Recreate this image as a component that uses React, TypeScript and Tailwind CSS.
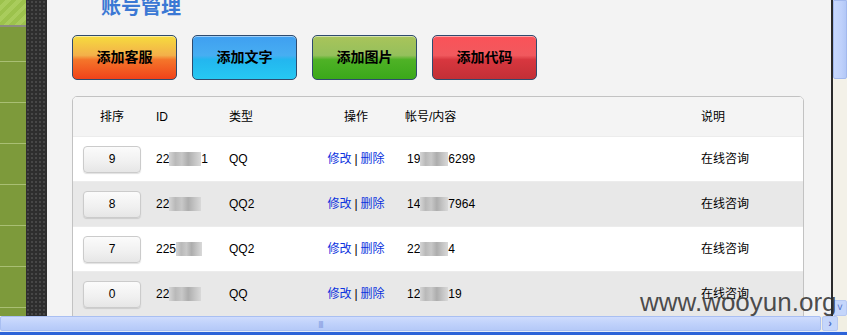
import React from "react";

type Row = {
  order: string;
  idHead: string;
  idTail: string;
  type: string;
  accHead: string;
  accTail: string;
  note: string;
};

const rows: Row[] = [
  { order: "9", idHead: "22", idTail: "1", type: "QQ", accHead: "19", accTail: "6299", note: "在线咨询" },
  { order: "8", idHead: "22", idTail: "", type: "QQ2", accHead: "14", accTail: "7964", note: "在线咨询" },
  { order: "7", idHead: "225", idTail: "", type: "QQ2", accHead: "22", accTail: "4", note: "在线咨询" },
  { order: "0", idHead: "22", idTail: "", type: "QQ", accHead: "12", accTail: "19", note: "在线咨询" },
];

const buttons = [
  { label: "添加客服", cls: "bg-[linear-gradient(180deg,#f6dc3e_0%,#f3b04a_45%,#f5762a_55%,#f0421a_100%)]" },
  { label: "添加文字", cls: "bg-[linear-gradient(180deg,#3f9ff0_0%,#47aef2_45%,#23b6ef_55%,#26c8f2_100%)]" },
  { label: "添加图片", cls: "bg-[linear-gradient(180deg,#a9c45a_0%,#95c05c_45%,#4fb226_55%,#3aa81a_100%)]" },
  { label: "添加代码", cls: "bg-[linear-gradient(180deg,#fb5258_0%,#f1595e_45%,#d8373f_55%,#c22f36_100%)]" },
];

function Mosaic({ w }: { w: number }) {
  return (
    <span
      className="inline-block h-[14px] align-middle bg-[linear-gradient(90deg,#d6d6d6_0%,#b9b9b9_20%,#c8c8c8_40%,#adadad_60%,#c4c4c4_80%,#d9d9d9_100%)]"
      style={{ width: w }}
    />
  );
}

function Sidebar() {
  return (
    <div className="flex w-[26px] shrink-0 flex-col bg-[#7d9a3b]">
      <div className="h-[25px] bg-[repeating-linear-gradient(135deg,#9cc24c_0px,#9cc24c_4px,#a9cc5c_4px,#a9cc5c_8px)]" />
      <div className="h-[2px] bg-[#8c8c80]" />
      <div className="h-[35px] border-b border-[#a9bf74]" />
      {Array.from({ length: 6 }).map((_, i) => (
        <div key={i} className="h-[41px] border-b border-[#a9bf74]" />
      ))}
    </div>
  );
}

export default function App() {
  return (
    <div className="relative flex h-[335px] w-[847px] flex-col overflow-hidden bg-[#f1efe3] font-['Liberation_Sans','Noto_Sans_CJK_SC',sans-serif] text-[12px] text-black">
      <div className="flex h-[316px]">
        <Sidebar />
        <div className="w-[21px] shrink-0 bg-[#2e2e2e] bg-[radial-gradient(#474747_1px,transparent_1.2px)] bg-[length:4px_4px]" />

        <div className="flex-1 overflow-hidden bg-[#f3f3f3] pl-[25px] pr-[27px]">
          <h1 className="-mt-[5px] ml-[29px] h-[24px] text-[20px] font-bold leading-[24px] text-[#3b78d4]">账号管理</h1>

          <div className="mt-[16px] flex gap-[15px]">
            {buttons.map((b) => (
              <button
                key={b.label}
                className={`h-[45px] w-[105px] rounded-[5px] border border-[#2f4b6e] text-[14px] font-bold text-black shadow-[inset_0_1px_0_rgba(255,255,255,0.5)] ${b.cls}`}
              >
                {b.label}
              </button>
            ))}
          </div>

          <div className="mt-[16px] overflow-hidden rounded-t-[5px] border border-[#c2c2c2] bg-white">
            <div className="grid h-[39px] grid-cols-[78px_73px_83px_98px_291px_1fr] items-center bg-[#f4f4f4] leading-[14px]">
              <div className="pl-[27px]">排序</div>
              <div className="pl-[5px]">ID</div>
              <div className="pl-[5px]">类型</div>
              <div className="text-center">操作</div>
              <div>帐号/内容</div>
              <div className="pl-[5px]">说明</div>
            </div>

            {rows.map((r, i) => (
              <div
                key={i}
                className={`grid h-[45px] grid-cols-[78px_73px_83px_98px_291px_1fr] items-center border-t border-[#ececec] leading-[14px] ${
                  i % 2 === 1 ? "bg-[#e8e8e8]" : "bg-white"
                }`}
              >
                <div className="pl-[10px]">
                  <div className="flex h-[27px] w-[58px] items-center justify-center rounded-[4px] border border-[#cbcbcb] bg-[linear-gradient(180deg,#fbfbfb_0%,#f0f0f0_60%,#e6e6e6_100%)] shadow-[0_1px_1px_rgba(0,0,0,0.12)]">
                    {r.order}
                  </div>
                </div>
                <div className="flex items-center pl-[5px]">
                  <span>{r.idHead}</span>
                  <Mosaic w={r.idHead.length === 3 ? 26 : 32} />
                  <span>{r.idTail}</span>
                </div>
                <div className="pl-[5px]">{r.type}</div>
                <div className="text-center">
                  <a className="text-[#0c33de]">修改</a>
                  <span className="mx-[3px]">|</span>
                  <a className="text-[#0c33de]">删除</a>
                </div>
                <div className="flex items-center pl-[2px]">
                  <span>{r.accHead}</span>
                  <Mosaic w={28} />
                  <span>{r.accTail}</span>
                </div>
                <div className="pl-[5px]">{r.note}</div>
              </div>
            ))}
          </div>
        </div>

        <div className="w-[2px] shrink-0 bg-[#2a2a2a]" />

        <div className="flex w-[14px] shrink-0 flex-col bg-[#f3f1e8]">
          <div className="h-[79px] rounded-b-[2px] border border-[#a3b9ee] bg-[linear-gradient(90deg,#c7d8fd_0%,#bfd1fb_60%,#b3c8f7_100%)]" />
          <div className="flex-1" />
          <div className="flex h-[16px] items-center justify-center rounded-[2px] border border-[#b6c8f2] bg-[#c5d6fb] text-[10px] leading-none text-[#4d6fc6]">
            ˅
          </div>
        </div>
      </div>

      <div className="flex h-[15px] items-stretch bg-[#f1efe3]">
        <div className="flex w-[821px] items-center justify-center rounded-[2px] border border-[#a9bff2] bg-[linear-gradient(180deg,#cfdcfd_0%,#c0d2fb_50%,#b5c9f8_100%)]">
          <span className="-ml-[180px] text-[8px] leading-none tracking-[-1px] text-[#7f9ae0]">||||</span>
        </div>
        <div className="ml-[1px] flex w-[16px] items-center justify-center rounded-[2px] border border-[#b6c8f2] bg-[#c5d6fb] text-[11px] font-bold leading-none text-[#4d6fc6]">
          ›
        </div>
      </div>
      <div className="h-[1px] bg-[#e6ecf8]" />
      <div className="flex-1 bg-[#2d64d8]" />

      <div className="pointer-events-none absolute left-[640px] top-[289px] text-[26px] leading-[26px] text-[#2f2f2f]/85 font-['Liberation_Sans',sans-serif]">
        www.wooyun.org
      </div>
    </div>
  );
}
